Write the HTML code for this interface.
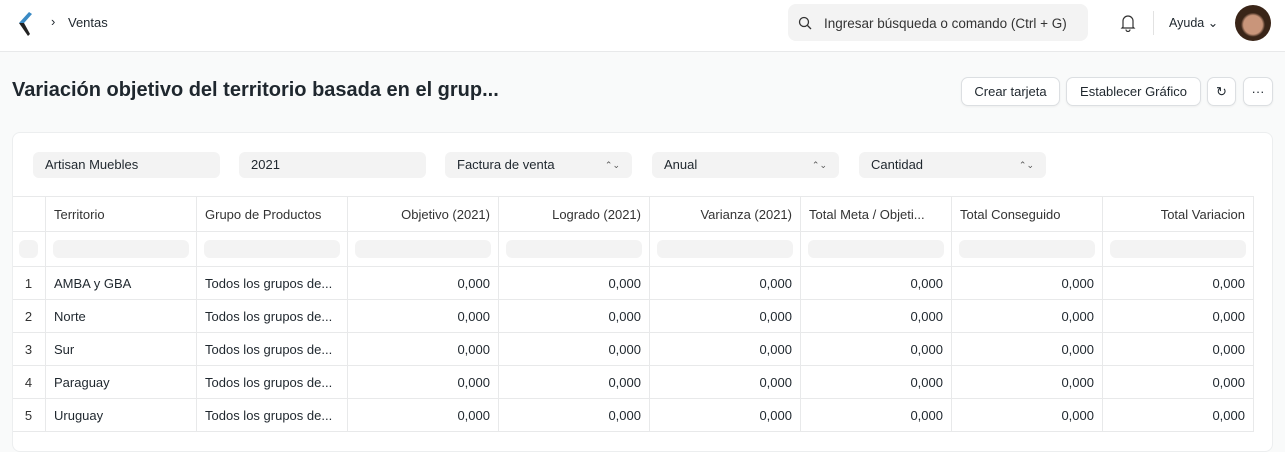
<!DOCTYPE html><html><head><style>
*{box-sizing:border-box;margin:0;padding:0}
body{width:1285px;height:442px;overflow:hidden;background:#f9fafa;font-family:"Liberation Sans",sans-serif;color:#1f272e;font-size:13px;position:relative}
.nav{position:absolute;left:0;top:0;width:1285px;height:52px;background:#fff;border-bottom:1px solid #e8e9ea}
.abs{position:absolute}
.search{left:788px;top:4px;width:300px;height:37px;background:#f3f3f3;border-radius:8px}
.btn{position:absolute;top:77px;height:29px;background:#fff;border:1px solid #dcdfe2;border-radius:7px;font-size:13px;line-height:27px;text-align:center;box-shadow:0 1px 2px rgba(0,0,0,.05)}
.card{left:12px;top:132px;width:1261px;height:320px;background:#fff;border:1px solid #eceeef;border-radius:8px;overflow:hidden}
.f{position:absolute;top:19px;width:187px;height:26px;background:#f3f3f3;border-radius:6px;padding-left:12px;line-height:26px;font-size:13px}
.f span{position:absolute;right:12px;top:0;font-size:9px;color:#555}
table{position:absolute;left:-2px;top:63px;border-collapse:collapse;table-layout:fixed}
td{border:1px solid #e8e9ea;height:33px;padding:0 8px;font-size:13px;white-space:nowrap;overflow:hidden}
tr.h td{height:35px;color:#333}
tr.fl td{height:35px;padding:0 7px}
.bar{height:18px;background:#f3f3f3;border-radius:6px}
.r{text-align:right}
.n{text-align:center;color:#333;padding:0}
</style></head><body>
<div class="nav">
<svg class="abs" style="left:17px;top:11px" width="16" height="26" viewBox="0 0 16 26"><path d="M12 1 L15 3 L7 12 L2 12Z" fill="#3a8ac4"/><path d="M2 12 L7 12 L13 23 L11 25Z" fill="#222"/></svg>
<div class="abs" style="left:51px;top:14px;font-size:13px">›</div>
<div class="abs" style="left:68px;top:15px;font-size:13px">Ventas</div>
<div class="abs search"><svg class="abs" style="left:10px;top:12px" width="14" height="14" viewBox="0 0 14 14"><circle cx="6" cy="6" r="4.5" fill="none" stroke="#333" stroke-width="1.3"/><path d="M9.5 9.5 L13 13" stroke="#333" stroke-width="1.3"/></svg><div class="abs" style="left:36px;top:12px;font-size:13.5px;color:#333">Ingresar búsqueda o comando (Ctrl + G)</div></div>
<svg class="abs" style="left:1120px;top:14px" width="16" height="18" viewBox="0 0 16 18"><path d="M3 13 V7 a5 5 0 0 1 10 0 V13 L14 14 H2Z M6 15.5 a2 2 0 0 0 4 0" fill="none" stroke="#333" stroke-width="1.2"/></svg>
<div class="abs" style="left:1153px;top:11px;width:1px;height:24px;background:#e2e2e2"></div>
<div class="abs" style="left:1169px;top:15px;font-size:12.5px">Ayuda ⌄</div>
<div class="abs" style="left:1235px;top:5px;width:36px;height:36px;border-radius:50%;background:radial-gradient(circle at 50% 55%,#c9957a 0 35%,#3a2518 45%)"></div>
</div>
<div class="abs" style="left:12px;top:79px;font-size:20px;font-weight:bold">Variación objetivo del territorio basada en el grup...</div>
<div class="btn" style="left:961px;width:99px">Crear tarjeta</div>
<div class="btn" style="left:1066px;width:135px">Establecer Gráfico</div>
<div class="btn" style="left:1207px;width:29px">↻</div>
<div class="btn" style="left:1243px;width:30px">···</div>
<div class="abs card">
<div class="f" style="left:20px">Artisan Muebles</div>
<div class="f" style="left:226px">2021</div>
<div class="f" style="left:432px">Factura de venta<span>⌃⌄</span></div>
<div class="f" style="left:639px">Anual<span>⌃⌄</span></div>
<div class="f" style="left:846px">Cantidad<span>⌃⌄</span></div>
<table>
<colgroup><col style="width:34px"><col style="width:151px"><col style="width:151px"><col style="width:151px"><col style="width:151px"><col style="width:151px"><col style="width:151px"><col style="width:151px"><col style="width:151px"></colgroup>
<tr class="h"><td></td><td>Territorio</td><td>Grupo de Productos</td><td class="r">Objetivo (2021)</td><td class="r">Logrado (2021)</td><td class="r">Varianza (2021)</td><td>Total Meta / Objeti...</td><td>Total Conseguido</td><td class="r">Total Variacion</td></tr>
<tr class="fl"><td><div class="bar"></div></td><td><div class="bar"></div></td><td><div class="bar"></div></td><td><div class="bar"></div></td><td><div class="bar"></div></td><td><div class="bar"></div></td><td><div class="bar"></div></td><td><div class="bar"></div></td><td><div class="bar"></div></td></tr>
<tr><td class="n">1</td><td>AMBA y GBA</td><td>Todos los grupos de...</td><td class="r">0,000</td><td class="r">0,000</td><td class="r">0,000</td><td class="r">0,000</td><td class="r">0,000</td><td class="r">0,000</td></tr>
<tr><td class="n">2</td><td>Norte</td><td>Todos los grupos de...</td><td class="r">0,000</td><td class="r">0,000</td><td class="r">0,000</td><td class="r">0,000</td><td class="r">0,000</td><td class="r">0,000</td></tr>
<tr><td class="n">3</td><td>Sur</td><td>Todos los grupos de...</td><td class="r">0,000</td><td class="r">0,000</td><td class="r">0,000</td><td class="r">0,000</td><td class="r">0,000</td><td class="r">0,000</td></tr>
<tr><td class="n">4</td><td>Paraguay</td><td>Todos los grupos de...</td><td class="r">0,000</td><td class="r">0,000</td><td class="r">0,000</td><td class="r">0,000</td><td class="r">0,000</td><td class="r">0,000</td></tr>
<tr><td class="n">5</td><td>Uruguay</td><td>Todos los grupos de...</td><td class="r">0,000</td><td class="r">0,000</td><td class="r">0,000</td><td class="r">0,000</td><td class="r">0,000</td><td class="r">0,000</td></tr>
</table>
</div>
</body></html>
